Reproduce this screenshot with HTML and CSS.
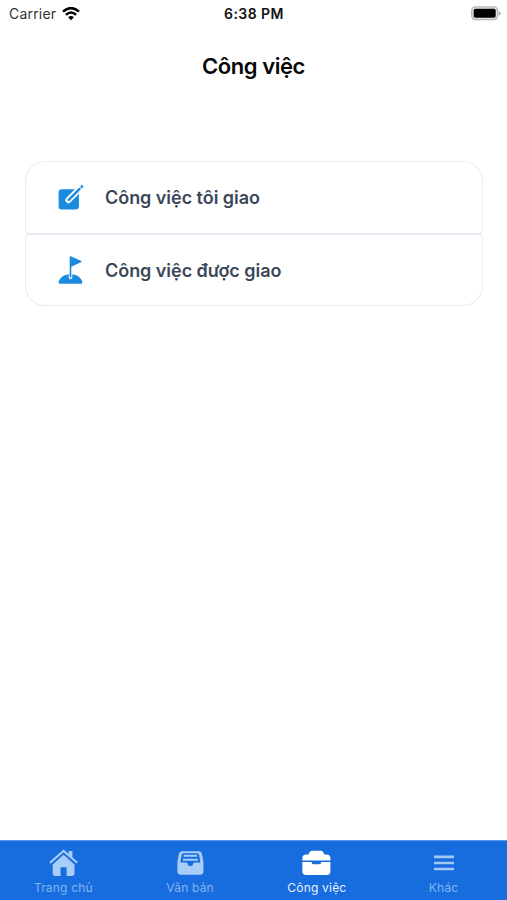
FILE: index.html
```html
<!DOCTYPE html>
<html lang="vi">
<head>
<meta charset="utf-8">
<title>Công việc</title>
<link rel="stylesheet" href="styles.css">
</head>
<body>
<div class="app">
  <header class="status">
    <div class="carrier"><span>Carrier</span>
      <svg width="18" height="14" viewBox="0 0 18 14" fill="none" stroke="#000" stroke-width="2.5"><path d="M1 4.6Q9-2.4 17 4.6M3.9 7.9Q9 3.2 14.1 7.9"/><path d="M6.1 10.2Q9 7.7 11.9 10.2L9 13.2Z" fill="#000" stroke="none"/></svg>
    </div>
    <time class="clock">6:38 PM</time>
    <div class="battery">
      <svg width="31" height="15" viewBox="0 0 31 15"><rect x="1.7" y=".9" width="26" height="12.7" rx="4" fill="#e4e4e4" stroke="#b5b5b5" stroke-width="1.4"/><rect x="3.7" y="2.7" width="22" height="9" rx="1.8" fill="#000"/><path d="M28.9 5.2Q30.9 5.8 30.9 7.4T28.9 9.4Z" fill="#b5b5b5"/></svg>
    </div>
  </header>
  <h1 class="title">Công việc</h1>
  <main class="list">
    <a class="item item-first">
      <svg class="item-icon" width="28" height="30" viewBox="0 0 28 30"><path d="M5 6.2H21.9V23.2Q21.9 26.4 18.5 26.4H5Q1.6 26.4 1.6 23.2V9.5Q1.6 6.2 5 6.2Z" fill="#1b8be0"/><path d="M11.4 17.2 23.2 5.2" stroke="#fff" stroke-width="6" stroke-linecap="round"/><path d="M11.8 16.8 22.6 5.9" stroke="#1b8be0" stroke-width="2.4" stroke-linecap="round"/><path d="m24.7 3.8.3-.3" stroke="#1b8be0" stroke-width="2.6" stroke-linecap="round"/></svg>
      <span class="label">Công việc tôi giao</span>
    </a>
    <a class="item item-last">
      <svg class="item-icon" width="28" height="30" viewBox="0 0 28 30" fill="#1b8be0"><path d="M2.2 28.8Q1.3 28.5 1.7 26.3C3.7 21.5 7.7 19.2 13.4 19.2S23.2 21.5 25.2 26.3Q25.6 28.5 24.7 28.8Z"/><path d="M11.7 18H15.3V23Q13.5 25.4 11.7 23Z" fill="#e8f4ff"/><path d="M12.7 22V1.9Q12.7.8 13.8 1.3L24.4 6Q25.4 6.5 24.4 7.1L14.3 11.8V22Q13.5 23 12.7 22Z"/></svg>
      <span class="label">Công việc được giao</span>
    </a>
  </main>
  <nav class="tabs">
    <a class="tab tab-home">
      <svg width="30" height="28" viewBox="-.6 0 30 28"><path d="M4.1 14.3 15 4.6 25.9 14.3V24.3Q25.9 27 23.2 27H18V18.2H12V27H6.8Q4.1 27 4.1 24.3Z" fill="#a9cdf9"/><path d="M2.1 14.4 15 3 27.9 14.4" fill="none" stroke="#176ddd" stroke-width="4.2"/><path d="M2 13.2 15 1.9 28 13.2" fill="none" stroke="#a9cdf9" stroke-width="2.1" stroke-linecap="round"/><path d="M20 2.1H23.8V9L20 5.9Z" fill="#a9cdf9"/></svg>
      <span>Trang chủ</span>
    </a>
    <a class="tab tab-docs">
      <svg width="30" height="28" viewBox="-.4 .3 30 28"><path d="M7 2.5H23Q25.9 2.5 26.5 5.2L28 13V22.5Q28 26 24.5 26H5.5Q2 26 2 22.5V13L3.5 5.2Q4.1 2.5 7 2.5Z" fill="#a9cdf9"/><path d="M8.2 4.5H21.8Q23.4 4.5 23.7 6L25 13.8H19.4Q18 13.8 17.7 15.2Q17.2 17.4 15 17.4T12.3 15.2Q12 13.8 10.6 13.8H5L6.3 6Q6.6 4.5 8.2 4.5Z" fill="#176ddd"/><path d="M8.2 7H21.8M7.5 11H22.5" fill="none" stroke="#a9cdf9" stroke-width="2"/></svg>
      <span>Văn bản</span>
    </a>
    <a class="tab tab-work active">
      <svg width="30" height="28" viewBox=".6 0 30 28" fill="#fff"><path d="M1 11.5V9.1Q1 5.5 4.6 5.5H7.2L7.9 3.6Q8.6 1.8 10.6 1.8H19.4Q21.4 1.8 22.1 3.6L22.8 5.5H25.4Q29 5.5 29 9.1V11.5Z"/><path d="M1 13H10.3V13.5Q10.3 15.2 12 15.2H18Q19.7 15.2 19.7 13.5V13H29V22.2Q29 26 25.2 26H4.8Q1 26 1 22.2Z"/></svg>
      <span>Công việc</span>
    </a>
    <a class="tab tab-more">
      <svg width="30" height="28" viewBox="0 0 30 28" stroke="#a3c8f7" stroke-width="2.6"><path d="M5 7.9H25M5 14H25M5 20H25"/></svg>
      <span>Khác</span>
    </a>
  </nav>
</div>
</body>
</html>
```
FILE: styles.css
```css
* { box-sizing: border-box; }
body { margin: 0; background: #fff; font-family: Inter, "Noto Sans", sans-serif; }
svg { display: block; flex: none; }
.app { height: 900px; display: flex; flex-direction: column; }
.status { height: 27px; display: grid; grid-template-columns: 1fr auto 1fr; align-items: center; padding: 0 6px 0 9px; font-size: 14px; color: #111; }
.carrier { display: flex; align-items: center; gap: 6px; color: #333; letter-spacing: .2px; }
.clock { font-weight: 600; letter-spacing: .45px; padding-right: 2px; }
.battery { justify-self: end; }
.title { margin: 23px 0 0; height: 32px; line-height: 32px; text-align: center; font-size: 22px; font-weight: 600; letter-spacing: -.45px; color: #080808; }
.list { margin: 79px 24.5px 0 25px; display: flex; flex-direction: column; }
.item { display: flex; align-items: center; padding-left: 31px; border: 1px solid #ececf1; background: #fff; }
.item-first { height: 73px; border-radius: 20px 20px 4px 4px; border-bottom-color: #e8e8f2; }
.item-last { height: 72px; border-radius: 4px 4px 20px 20px; border-top-color: #e8e8f2; }
.label { margin-left: 20px; font-size: 18px; font-weight: 600; color: #3b4758; letter-spacing: -.04px; white-space: nowrap; }
.tabs { margin-top: auto; height: 60px; display: grid; grid-template-columns: repeat(4, 1fr); background: #176ddd; border-top: 1px solid #5799e8; }
.tab { display: flex; flex-direction: column; align-items: center; padding-top: 8px; font-size: 12px; line-height: 18px; letter-spacing: .2px; color: #82b5f2; }
.tab span { margin-top: 2px; }
.tab.active { color: #e6f1ff; }
```
